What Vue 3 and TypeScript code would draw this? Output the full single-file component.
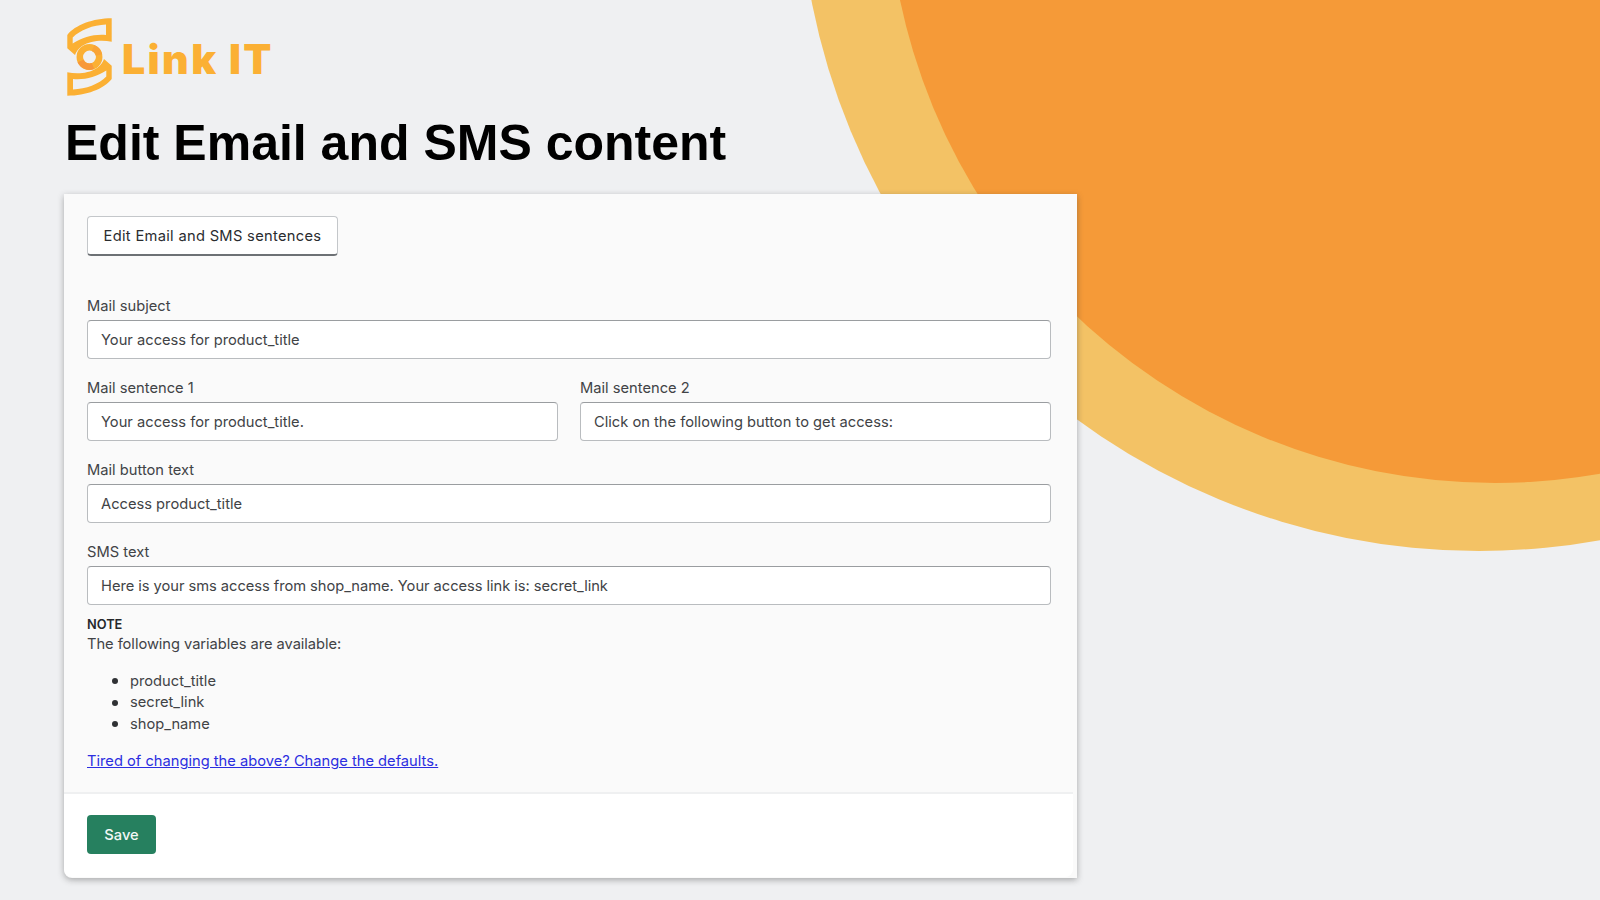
<template>
  <div class="page">
    <!-- background circles -->
    <div class="circle circle-outer"></div>
    <div class="circle circle-inner"></div>

    <div class="content">
      <div class="brand">
        <svg class="logo" viewBox="0 0 45 78" aria-hidden="true">
          <path
            d="M0.3 17 C8 7 26 0.3 44.7 0.3 V23.7 C36 22 24 22 15 28 C11 31 9 34 8 37 L0.3 30.3 Z M5.7 19.5 V25.5 C16 19 27 16 39 17 V6.5 C26 7 13 12 5.7 19.5 Z"
            fill="#fbb034"
            fill-rule="evenodd"
          />
          <path
            d="M0.3 17 C8 7 26 0.3 44.7 0.3 V23.7 C36 22 24 22 15 28 C11 31 9 34 8 37 L0.3 30.3 Z M5.7 19.5 V25.5 C16 19 27 16 39 17 V6.5 C26 7 13 12 5.7 19.5 Z"
            fill="#fbb034"
            fill-rule="evenodd"
            transform="rotate(180 22.5 39)"
          />
          <circle cx="22.5" cy="39" r="9.7" fill="none" stroke="#fbb034" stroke-width="6.5" />
          <path d="M13.5 43 A9.7 9.7 0 0 0 26 48" fill="none" stroke="#f7983a" stroke-width="6.5" />
          <path d="M26 30 A9.7 9.7 0 0 1 32 37" fill="none" stroke="#f9a437" stroke-width="6.5" />
        </svg>
        <span class="brand-name">Link IT</span>
      </div>
      <h1 class="title">Edit Email and SMS content</h1>

      <div class="card">
        <div class="card-body">
          <button class="btn" type="button">Edit Email and SMS sentences</button>

          <div class="fields">
            <div class="field">
              <label>Mail subject</label>
              <input type="text" v-model="form.subject" />
            </div>
            <div class="field-row">
              <div class="field">
                <label>Mail sentence 1</label>
                <input type="text" v-model="form.sentence1" />
              </div>
              <div class="field">
                <label>Mail sentence 2</label>
                <input type="text" v-model="form.sentence2" />
              </div>
            </div>
            <div class="field">
              <label>Mail button text</label>
              <input type="text" v-model="form.buttonText" />
            </div>
            <div class="field">
              <label>SMS text</label>
              <input class="sms-input" type="text" v-model="form.smsText" />
            </div>
          </div>

          <div class="note-title">NOTE</div>
          <p class="note-text">The following variables are available:</p>
          <ul class="vars">
            <li v-for="name in variables" :key="name">{{ name }}</li>
          </ul>
          <a class="defaults-link" href="#">Tired of changing the above? Change the defaults.</a>
        </div>
        <div class="card-footer">
          <button class="btn-save" type="button">Save</button>
        </div>
      </div>
    </div>
  </div>
</template>

<script setup lang="ts">
import { reactive } from 'vue';

const form = reactive({
  subject: 'Your access for product_title',
  sentence1: 'Your access for product_title.',
  sentence2: 'Click on the following button to get access:',
  buttonText: 'Access product_title',
  smsText: 'Here is your sms access from shop_name. Your access link is: secret_link'
});

const variables = ['product_title', 'secret_link', 'shop_name'];
</script>

<style>
body {
  margin: 0;
  background: #eff0f2;
}
</style>

<style scoped>
.page {
  position: relative;
  width: 1600px;
  height: 900px;
  overflow: hidden;
  background: #eff0f2;
  font-family: Inter, "Liberation Sans", sans-serif;
  color: #414346;
}

.circle {
  position: absolute;
  border-radius: 50%;
}

.circle-outer {
  left: 799px;
  top: -809px;
  width: 1360px;
  height: 1360px;
  background: #f3c265;
}

.circle-inner {
  left: 887px;
  top: -733px;
  width: 1216px;
  height: 1216px;
  background: #f59a38;
}

.content {
  position: relative;
  display: flex;
  flex-direction: column;
  align-items: flex-start;
  padding: 18px 0 0 64px;
}

.brand {
  display: flex;
  align-items: center;
  gap: 10px;
  height: 78px;
  padding-left: 3px;
}

.logo {
  width: 45px;
  height: 78px;
}

.brand-name {
  font-size: 41px;
  font-weight: 900;
  line-height: 1;
  letter-spacing: 2.4px;
  color: #fbb034;
  margin-top: 4px;
}

.title {
  margin: 18px 0 0 1px;
  font-family: "Liberation Sans", Arial, sans-serif;
  font-size: 50px;
  line-height: 58px;
  font-weight: 700;
  color: #000;
}

.card {
  margin-top: 22px;
  width: 1013px;
  height: 684px;
  box-sizing: border-box;
  display: flex;
  flex-direction: column;
  background: #fafafa;
  border-radius: 0 0 0 8px;
  box-shadow: 0 2px 6px rgba(60, 60, 60, 0.4);
}

.card-body {
  flex: 1;
  padding: 22px 26px 0 23px;
}

.btn {
  display: block;
  width: 251px;
  height: 40px;
  padding: 0;
  background: #fff;
  border: 1px solid #c4c7ca;
  border-bottom: 2px solid #6d7175;
  border-radius: 4px;
  font: 400 14.7px Inter, sans-serif;
  letter-spacing: 0.3px;
  color: #2a2c2f;
}

.fields {
  margin-top: 40px;
  display: flex;
  flex-direction: column;
  gap: 19px;
}

.field {
  flex: 1;
  display: flex;
  flex-direction: column;
}

.field-row {
  display: flex;
  gap: 22px;
}

.field label {
  font-size: 14.7px;
  line-height: 21px;
  margin-bottom: 3px;
}

.field input {
  box-sizing: border-box;
  width: 100%;
  height: 39px;
  padding: 0 13px;
  background: #fff;
  border: 1px solid #b9bcbf;
  border-top-color: #9a9da0;
  border-radius: 4px;
  font: 400 14.7px Inter, sans-serif;
  color: #414346;
  outline: none;
}

.field .sms-input {
  letter-spacing: -0.04px;
}

.note-title {
  margin-top: 11px;
  font-size: 12.8px;
  font-weight: 600;
  line-height: 18px;
  color: #26282b;
}

.note-text {
  margin: 0;
  font-size: 14.7px;
  line-height: 21px;
  letter-spacing: -0.05px;
}

.vars {
  margin: 15.5px 0 15px;
  padding: 0 0 0 25px;
  list-style: none;
  font-size: 14.7px;
  line-height: 21.6px;
}

.vars li {
  display: flex;
  align-items: center;
  gap: 12px;
}

.vars li::before {
  content: '';
  width: 6px;
  height: 6px;
  border-radius: 50%;
  background: #2f3134;
}

.defaults-link {
  font-size: 14.7px;
  line-height: 21px;
  color: #2c2ee0;
}

.card-footer {
  height: 85px;
  margin: 0 4px 1px 0;
  padding: 21px 0 0 23px;
  box-sizing: border-box;
  background: #fff;
  border-top: 2px solid #eff0f1;
  border-radius: 0 0 8px 8px;
}

.btn-save {
  display: block;
  width: 69px;
  height: 39px;
  padding: 0;
  background: #26805f;
  border: none;
  border-radius: 4px;
  font: 500 14.7px Inter, sans-serif;
  color: #f2f7f5;
}
</style>
